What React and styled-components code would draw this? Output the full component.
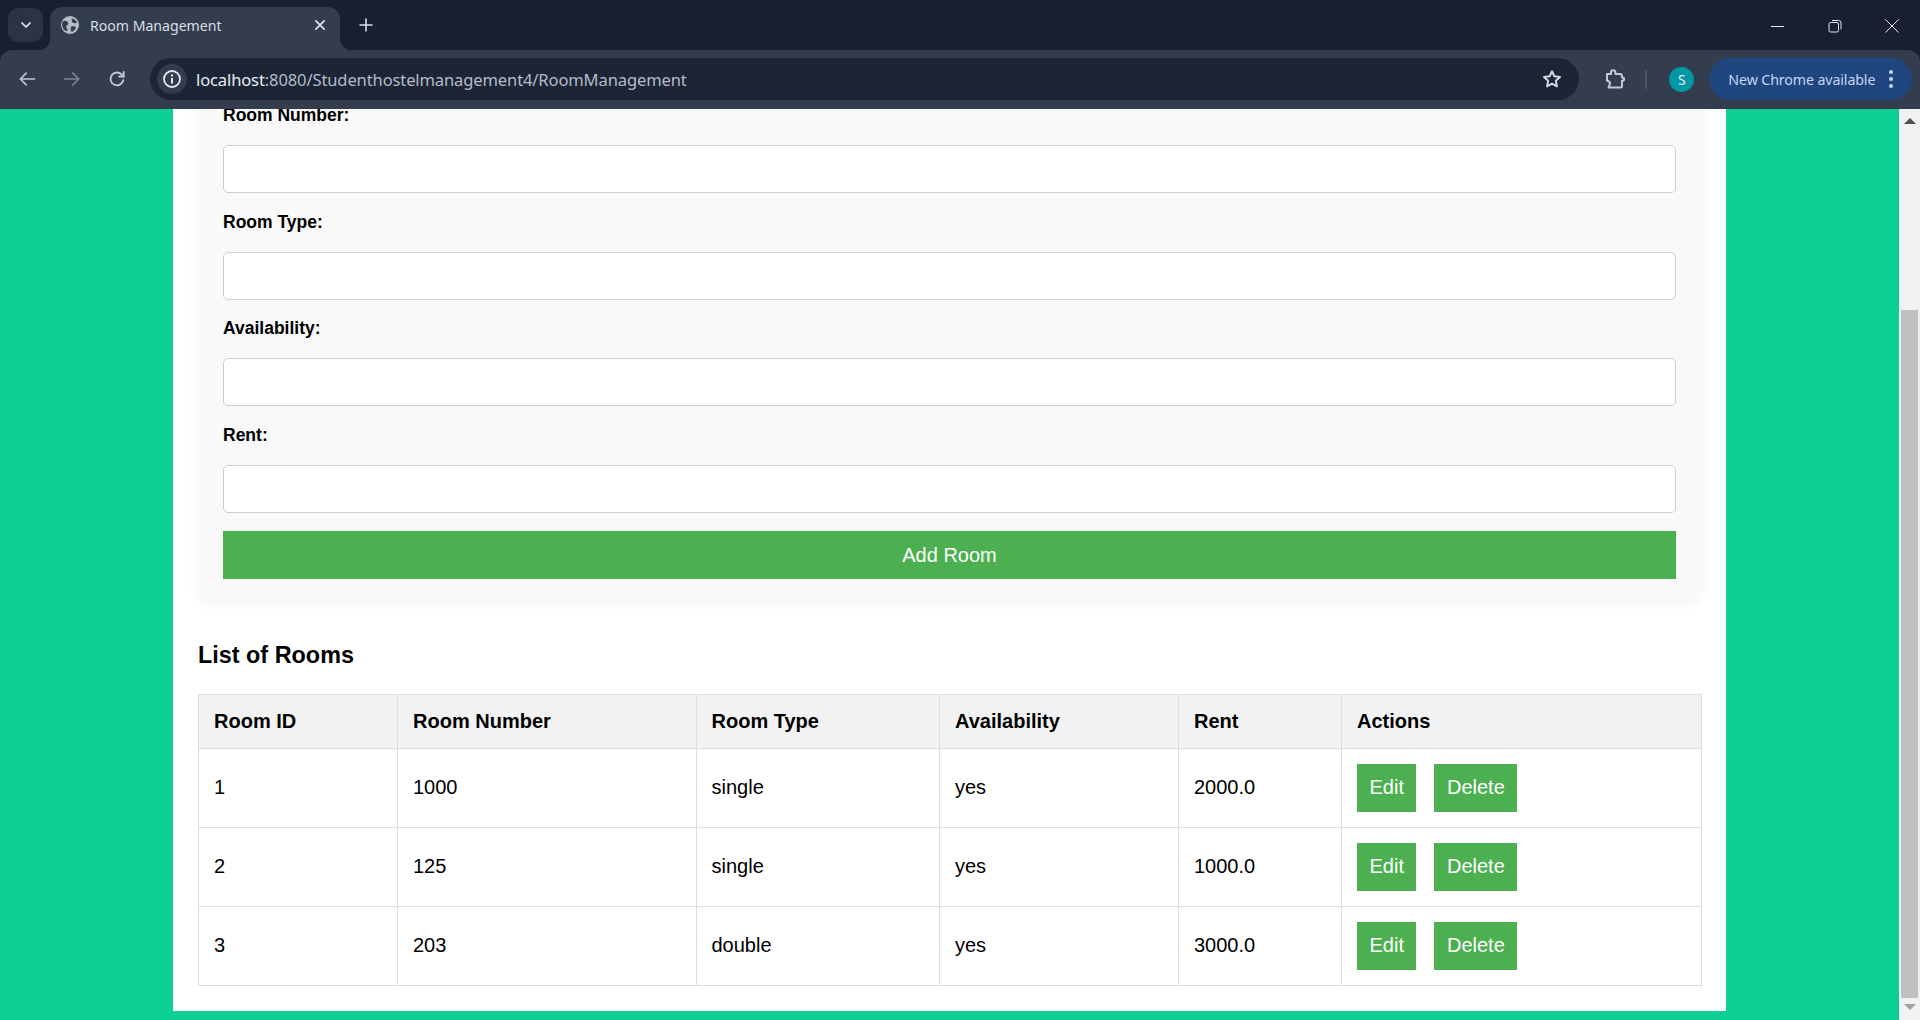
import React from 'react'
import styled, { createGlobalStyle } from 'styled-components'

const GlobalStyle = createGlobalStyle`
  html, body {
    margin: 0;
    height: 100%;
    overflow: hidden;
    font-family: "Liberation Sans", Arial, sans-serif;
  }
  * { box-sizing: border-box; }
`

const Window = styled.div`
  display: flex;
  flex-direction: column;
  height: 1020px;
  background: #172033;
`
const TabStrip = styled.div`
  display: flex;
  align-items: flex-end;
  height: 50px;
  flex: none;
`
const TabSearch = styled.div`
  display: flex;
  align-items: center;
  justify-content: center;
  width: 35px;
  height: 34px;
  margin: 0 7px 8px 8px;
  border-radius: 10px;
  background: #2b3445;
  color: #e3e6ec;
`
const Tab = styled.div`
  position: relative;
  display: flex;
  align-items: center;
  width: 290px;
  height: 43px;
  padding: 0 11px 7px 11px;
  border-radius: 12px 12px 0 0;
  background: #343d4e;
  color: #d9dde4;
  font-family: "Noto Sans", "Open Sans", sans-serif;
  font-size: 14.1px;
  &::before, &::after {
    content: '';
    position: absolute;
    bottom: 0;
    width: 12px;
    height: 12px;
  }
  &::before {
    left: -12px;
    background: radial-gradient(circle at 0 0, transparent 12px, #343d4e 12.5px);
  }
  &::after {
    right: -12px;
    background: radial-gradient(circle at 100% 0, transparent 12px, #343d4e 12.5px);
  }
`
const TabTitle = styled.span`
  flex: 1;
  margin-left: 11px;
`
const NewTab = styled.div`
  display: flex;
  margin: 0 0 17px 18px;
  color: #d9dde4;
`
const WindowControls = styled.div`
  display: flex;
  align-items: center;
  gap: 43px;
  margin: 0 21px 17px auto;
  color: #e3e6ec;
`
const Toolbar = styled.div`
  display: flex;
  align-items: center;
  height: 59px;
  flex: none;
  padding: 0 8px 1px 17px;
  border-radius: 12px 12px 0 0;
  background: #343d4e;
  color: #c3c9d4;
`
const NavIcons = styled.div`
  display: flex;
  align-items: center;
  gap: 25px;
  margin-right: 23px;
`
const AddressBar = styled.div`
  display: flex;
  align-items: center;
  width: 1432px;
  height: 42px;
  padding: 0 16px 0 7px;
  border-radius: 21px;
  background: #1c2536;
`
const SiteInfo = styled.div`
  display: flex;
  align-items: center;
  justify-content: center;
  width: 30px;
  height: 30px;
  border-radius: 50%;
  background: #343d4e;
  color: #e6e8ec;
`
const Url = styled.div`
  flex: 1;
  margin-left: 9px;
  font-family: "Noto Sans", "Open Sans", sans-serif;
  font-size: 16.55px;
  letter-spacing: -0.12px;
  color: #b4bbc8;
  span { color: #e9ecf1; }
`
const Extensions = styled.div`
  display: flex;
  margin-left: 25px;
`
const Divider = styled.div`
  width: 2px;
  height: 19px;
  margin: 0 22px 0 19px;
  background: #4a5364;
`
const Avatar = styled.div`
  display: flex;
  align-items: center;
  justify-content: center;
  width: 25px;
  height: 25px;
  border-radius: 50%;
  background: #0097a7;
  color: #e8f6f8;
  font-family: "Noto Sans", sans-serif;
  font-size: 14px;
`
const UpdatePill = styled.div`
  display: flex;
  align-items: center;
  width: 203px;
  height: 42px;
  margin-left: 15px;
  padding-left: 19px;
  border-radius: 21px;
  background: #1f467f;
  color: #c4d5f2;
  font-family: "Noto Sans", "Open Sans", sans-serif;
  font-size: 14.2px;
  letter-spacing: -0.1px;
`
const MoreDots = styled.div`
  display: flex;
  flex-direction: column;
  gap: 3px;
  margin-left: 14px;
  i {
    width: 4px;
    height: 4px;
    border-radius: 50%;
    background: #c4d5f2;
  }
`

const Viewport = styled.div`
  display: flex;
  flex: 1;
  min-height: 0;
  overflow: hidden;
  background: #0bcf93;
`
const PageArea = styled.div`
  flex: 1;
  min-width: 0;
`
const Container = styled.div`
  width: 1553px;
  height: 932px;
  margin: -30px auto 0;
  padding: 0 25px;
  background: #fff;
`
const FormCard = styled.form`
  padding: 25px;
  border-radius: 12px;
  background: #f9f9f9;
  box-shadow: 0 0 12px rgba(0, 0, 0, 0.05);
`
const Label = styled.label`
  display: block;
  height: 20px;
  margin-bottom: 21px;
  font-size: 17.5px;
  line-height: 22px;
  font-weight: bold;
  color: #000;
`
const Input = styled.input`
  display: block;
  width: 100%;
  height: 48px;
  margin-bottom: 17.67px;
  border: 1px solid #ccc;
  border-radius: 5px;
  background: #fff;
`
const AddButton = styled.button`
  display: block;
  width: 100%;
  height: 48px;
  padding: 2px 0 0;
  border: 0;
  background: #4caf50;
  color: #fff;
  font-family: inherit;
  font-size: 20px;
`
const Heading = styled.h3`
  margin: 38px 0 25px;
  font-size: 23.4px;
  line-height: 27px;
  font-weight: bold;
  color: #000;
`
const RoomTable = styled.table`
  width: 1503px;
  table-layout: fixed;
  border-collapse: collapse;
  font-size: 20px;
  color: #000;
`
const Th = styled.th`
  height: 54px;
  padding: 15px;
  border: 1px solid #ddd;
  background: #f2f2f2;
  text-align: left;
  font-weight: bold;
`
const Td = styled.td`
  height: 79px;
  padding: 15px;
  border: 1px solid #ddd;
`
const ActionButton = styled.button`
  height: 48px;
  margin-right: 18px;
  padding: 0 12.5px;
  border: 0;
  background: #4caf50;
  color: #fff;
  font-family: inherit;
  font-size: 20px;
  vertical-align: middle;
`

const Scrollbar = styled.div`
  display: flex;
  flex-direction: column;
  align-items: center;
  flex: none;
  width: 21px;
  background: #f1f1f1;
`
const ScrollArrow = styled.div`
  flex: none;
  width: 0;
  height: 0;
  margin: ${p => p.$margin};
  border-left: 6px solid transparent;
  border-right: 6px solid transparent;
  ${p => p.$up ? 'border-bottom: 6px solid #505050;' : 'border-top: 6px solid #a3a3a3;'}
`
const ScrollThumb = styled.div`
  flex: none;
  width: 17px;
  height: 688px;
  margin-top: 186px;
  background: #c1c1c1;
`

const Icon = ({ size = 24, stroke = 2, children }) => (
  <svg width={size} height={size} viewBox="0 0 24 24" fill="none" stroke="currentColor" strokeWidth={stroke}
    strokeLinecap="round" strokeLinejoin="round">
    {children}
  </svg>
)

const columns = [
  { name: 'Room ID', width: 199 },
  { name: 'Room Number', width: 298.5 },
  { name: 'Room Type', width: 243.5 },
  { name: 'Availability', width: 239 },
  { name: 'Rent', width: 163 },
  { name: 'Actions', width: 360 },
]

const rooms = [
  { id: 1, number: 1000, type: 'single', available: 'yes', rent: '2000.0' },
  { id: 2, number: 125, type: 'single', available: 'yes', rent: '1000.0' },
  { id: 3, number: 203, type: 'double', available: 'yes', rent: '3000.0' },
]

const fields = ['Room Number:', 'Room Type:', 'Availability:', 'Rent:']

export default function App() {
  return (
    <Window>
      <GlobalStyle />
      <TabStrip>
        <TabSearch>
          <Icon size={16} stroke={2.6}><path d="M6 9l6 6 6-6" /></Icon>
        </TabSearch>
        <Tab>
          <svg width="18" height="18" viewBox="0 0 18 18">
            <circle cx="9" cy="9" r="9" fill="#b5bbc6" />
            <path d="M1.5 5.5C4 4 6 5 7 6.5S6.5 9 5.5 9.5 6 12 6.5 14 4 15 2.5 13C1 11 .8 7.5 1.5 5.5zM11 2.5c2 .3 4 1.8 5 4-1.5 1-3 .8-4 .2s-1.8-2.7-1-4.2zM10.500 10.500c1.500-.6 3-.3 4.500.5-.5 2-2 4-4 5-1.500-1-2-4.500-.5-5.500z" fill="#343d4e" />
          </svg>
          <TabTitle>Room Management</TabTitle>
          <Icon size={18} stroke={2.4}><path d="M6.500 6.500l11 11M17.500 6.500l-11 11" /></Icon>
        </Tab>
        <NewTab>
          <Icon size={16} stroke={2.4}><path d="M12 3v18M3 12h18" /></Icon>
        </NewTab>
        <WindowControls>
          <svg width="14" height="14" viewBox="0 0 14 14" fill="none" stroke="currentColor"><path d="M0 7.500h13" /></svg>
          <svg width="14" height="14" viewBox="0 0 14 14" fill="none" stroke="currentColor">
            <rect x="1" y="3.500" width="9.500" height="9.500" rx="1.500" />
            <path d="M4 1.500h6.500A2.500 2.500 0 0 1 13 4v6.500" />
          </svg>
          <svg width="14" height="14" viewBox="0 0 14 14" fill="none" stroke="currentColor"><path d="M.5.500l13 13M13.500.500l-13 13" /></svg>
        </WindowControls>
      </TabStrip>
      <Toolbar>
        <NavIcons>
          <Icon size={20} stroke={2}><path d="M21 12H4M11 5l-7 7 7 7" /></Icon>
          <span style={{ display: 'flex', opacity: 0.5 }}>
            <Icon size={20} stroke={2}><path d="M3 12h17M13 5l7 7-7 7" /></Icon>
          </span>
          <Icon size={20} stroke={2.2}>
            <path d="M19.500 13.500A7.700 7.700 0 1 1 17.500 6.500L20 9" />
            <path d="M20 3.500V9h-5.500" />
          </Icon>
        </NavIcons>
        <AddressBar>
          <SiteInfo>
            <svg width="20" height="20" viewBox="0 0 20 20">
              <circle cx="10" cy="10" r="8" fill="none" stroke="currentColor" strokeWidth="1.800" />
              <rect x="9" y="9" width="2" height="5.500" fill="currentColor" />
              <rect x="9" y="5.500" width="2" height="2" fill="currentColor" />
            </svg>
          </SiteInfo>
          <Url><span>localhost</span>:8080/Studenthostelmanagement4/RoomManagement</Url>
          <svg width="22" height="22" viewBox="0 0 24 24" fill="none" stroke="#d5d8de" strokeWidth="2.200" strokeLinejoin="round">
            <path d="M12 3.500l2.600 5.600 6.100.7-4.500 4.200 1.200 6-5.400-3-5.400 3 1.200-6-4.500-4.200 6.100-.7z" />
          </svg>
        </AddressBar>
        <Extensions>
          <svg width="22" height="22" viewBox="0 0 22 22" fill="none" stroke="currentColor" strokeWidth="2" strokeLinejoin="round">
            <path d="M3 6h4V4.500a2.200 2.200 0 0 1 4.400 0V6h5a1.500 1.500 0 0 1 1.500 1.500V9.500h.6a1.600 1.600 0 0 1 0 3.200H18v5.300a1.500 1.500 0 0 1-1.500 1.500H4.500L5.800 16.500c.5-1.500-.4-3-1.800-3.500L3 12.700z" />
          </svg>
        </Extensions>
        <Divider />
        <Avatar>S</Avatar>
        <UpdatePill>
          New Chrome available
          <MoreDots><i /><i /><i /></MoreDots>
        </UpdatePill>
      </Toolbar>
      <Viewport>
        <PageArea>
          <Container>
            <FormCard>
              {fields.map(field => (
                <div key={field}>
                  <Label>{field}</Label>
                  <Input type="text" />
                </div>
              ))}
              <AddButton type="button">Add Room</AddButton>
            </FormCard>
            <Heading>List of Rooms</Heading>
            <RoomTable>
              <colgroup>
                {columns.map(col => <col key={col.name} width={col.width} />)}
              </colgroup>
              <thead>
                <tr>
                  {columns.map(col => <Th key={col.name}>{col.name}</Th>)}
                </tr>
              </thead>
              <tbody>
                {rooms.map(room => (
                  <tr key={room.id}>
                    <Td>{room.id}</Td>
                    <Td>{room.number}</Td>
                    <Td>{room.type}</Td>
                    <Td>{room.available}</Td>
                    <Td>{room.rent}</Td>
                    <Td>
                      <ActionButton>Edit</ActionButton>
                      <ActionButton>Delete</ActionButton>
                    </Td>
                  </tr>
                ))}
              </tbody>
            </RoomTable>
          </Container>
        </PageArea>
        <Scrollbar>
          <ScrollArrow $up $margin="9px 0 0" />
          <ScrollThumb />
          <ScrollArrow $margin="6px 0 0" />
        </Scrollbar>
      </Viewport>
    </Window>
  )
}
